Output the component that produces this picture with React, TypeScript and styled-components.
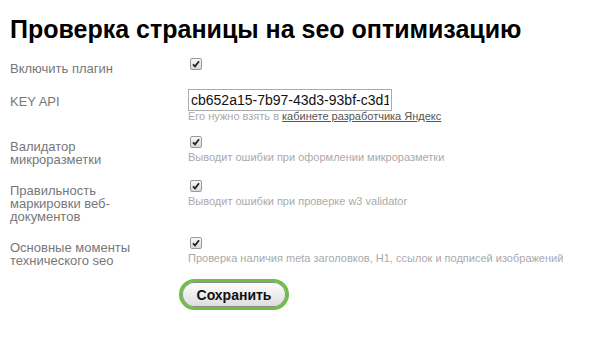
import styled, { createGlobalStyle } from "styled-components"

const GlobalStyle = createGlobalStyle`
    html, body {
        margin: 0;
        padding: 0;
        background: #ffffff;
    }
    body {
        font-family: "Liberation Sans", Arial, sans-serif;
    }
`

const Page = styled.div`
    width: 601px;
    height: 342px;
    padding: 14px 10px 0;
    box-sizing: border-box;
    overflow: hidden;
`

const Title = styled.h1`
    margin: 0 0 14px;
    font-size: 25px;
    line-height: 30px;
    font-weight: bold;
    color: #000;
`

const Form = styled.div`
    display: grid;
    grid-template-columns: 178px 1fr;
    row-gap: 14px;
    align-items: start;
`

const Label = styled.div<{ $offset?: number }>`
    font-size: 13px;
    line-height: 13px;
    color: #777;
    padding-top: ${p => p.$offset ?? 4}px;
    padding-right: 30px;
`

const Field = styled.div`
    display: flex;
    flex-direction: column;
    align-items: flex-start;
`

const Check = styled.span`
    display: inline-flex;
    justify-content: center;
    align-items: center;
    width: 10px;
    height: 10px;
    margin-left: 2px;
    border: 1px solid #9a9a9a;
    border-radius: 2px;
    background: linear-gradient(#fafafa, #d8d8d8);
    svg {
        width: 8px;
        height: 8px;
    }
`

const Hint = styled.div<{ $tight?: boolean }>`
    margin-top: ${p => (p.$tight ? 0 : 3)}px;
    font-size: 11px;
    line-height: ${p => (p.$tight ? 11 : 13)}px;
    color: #aaa;
    a {
        color: #555;
        text-decoration: underline;
    }
`

const KeyInput = styled.input`
    width: 204px;
    height: 22px;
    box-sizing: border-box;
    padding: 0 2px;
    border: 1px solid #aaa;
    font-family: "Liberation Sans", Arial, sans-serif;
    font-size: 14px;
    color: #111;
    outline: none;
`

const SaveButton = styled.button`
    margin: 12px 0 0 169px;
    width: 110px;
    height: 31px;
    border: 3px solid #6dbf45;
    border-radius: 16px;
    background: linear-gradient(#ffffff, #dcdcdc);
    box-shadow: inset 0 0 0 1px #8a8a8a;
    font-family: "Liberation Sans", Arial, sans-serif;
    font-size: 14px;
    font-weight: bold;
    color: #111;
    cursor: pointer;
`

function Checkbox() {
    return (
        <Check>
            <svg viewBox="0 0 10 10">
                <path d="M1.2 5.4 L3.8 8 L8.8 1.6" fill="none" stroke="#222" strokeWidth="2.2" />
            </svg>
        </Check>
    )
}

interface OptionProps {
    label: string
    hint?: string
}

function Option({ label, hint }: OptionProps) {
    return (
        <>
            <Label>{label}</Label>
            <Field>
                <Checkbox />
                {hint && <Hint>{hint}</Hint>}
            </Field>
        </>
    )
}

export default function App() {
    return (
        <Page>
            <GlobalStyle />
            <Title>Проверка страницы на seo оптимизацию</Title>
            <Form>
                <Option label="Включить плагин" />
                <Label $offset={6}>KEY API</Label>
                <Field>
                    <KeyInput defaultValue="cb652a15-7b97-43d3-93bf-c3d1e4a7b2f0" />
                    <Hint $tight>
                        Его нужно взять в <a href="#">кабинете разработчика Яндекс</a>
                    </Hint>
                </Field>
                <Option label="Валидатор микроразметки" hint="Выводит ошибки при оформлении микроразметки" />
                <Option label="Правильность маркировки веб-документов" hint="Выводит ошибки при проверке w3 validator" />
                <Option
                    label="Основные моменты технического seo"
                    hint="Проверка наличия meta заголовков, H1, ссылок и подписей изображений"
                />
            </Form>
            <SaveButton>Сохранить</SaveButton>
        </Page>
    )
}
